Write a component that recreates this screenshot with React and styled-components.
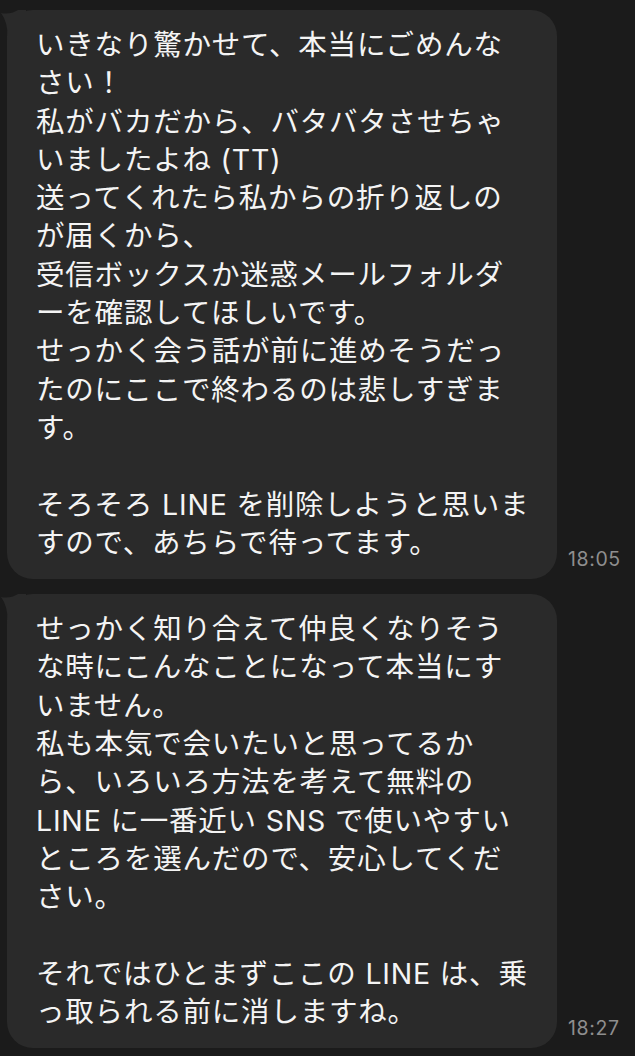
import React from "react";
import styled, { createGlobalStyle } from "styled-components";

const GlobalStyle = createGlobalStyle`
  html, body {
    margin: 0;
    padding: 0;
    background: #1b1b1b;
  }
  body {
    font-family: Inter, "Noto Sans CJK JP", sans-serif;
  }
`;

const Page = styled.div`
  width: 635px;
  height: 1056px;
  box-sizing: border-box;
  padding: 10px 0 0 7px;
  display: flex;
  flex-direction: column;
  gap: 15px;
  overflow: hidden;
`;

const Row = styled.div`
  display: flex;
  align-items: flex-end;
  gap: 11px;
`;

const Bubble = styled.div`
  position: relative;
  width: 550px;
  box-sizing: border-box;
  padding: 16px 0 17px 29px;
  background: #2a2a2a;
  border-radius: 26px;
  color: #f4f4f4;
  font-size: 28.5px;
  line-height: 38.3px;
  letter-spacing: 0.8px;
  white-space: nowrap;
`;

const Tail = styled.svg`
  position: absolute;
  left: -7px;
  top: 0;
  width: 26px;
  height: 30px;
`;

const Time = styled.span`
  font-family: Inter, "Noto Sans", sans-serif;
  font-size: 19.5px;
  letter-spacing: 0.6px;
  color: #8e8e8e;
  margin-bottom: 8px;
`;

const tail = (
  <Tail viewBox="0 0 26 30">
    <path d="M1 3 Q10 5 18 0 L26 0 L26 30 L8 30 Q8 12 1 3 Z" fill="#2a2a2a" />
  </Tail>
);

const messages = [
  {
    time: "18:05",
    lines: [
      "いきなり驚かせて、本当にごめんな",
      "さい！",
      "私がバカだから、バタバタさせちゃ",
      "いましたよね (TT)",
      "送ってくれたら私からの折り返しの",
      "が届くから、",
      "受信ボックスか迷惑メールフォルダ",
      "ーを確認してほしいです。",
      "せっかく会う話が前に進めそうだっ",
      "たのにここで終わるのは悲しすぎま",
      "す。",
      "",
      "そろそろ LINE を削除しようと思いま",
      "すので、あちらで待ってます。",
    ],
  },
  {
    time: "18:27",
    lines: [
      "せっかく知り合えて仲良くなりそう",
      "な時にこんなことになって本当にす",
      "いません。",
      "私も本気で会いたいと思ってるか",
      "ら、いろいろ方法を考えて無料の",
      "LINE に一番近い SNS で使いやすい",
      "ところを選んだので、安心してくだ",
      "さい。",
      "",
      "それではひとまずここの LINE は、乗",
      "っ取られる前に消しますね。",
    ],
  },
];

export default function App() {
  return (
    <>
      <GlobalStyle />
      <Page>
        {messages.map((m) => (
          <Row key={m.time}>
            <Bubble>
              {tail}
              {m.lines.map((l, i) => (
                <div key={i}>{l || "\u00a0"}</div>
              ))}
            </Bubble>
            <Time>{m.time}</Time>
          </Row>
        ))}
      </Page>
    </>
  );
}
